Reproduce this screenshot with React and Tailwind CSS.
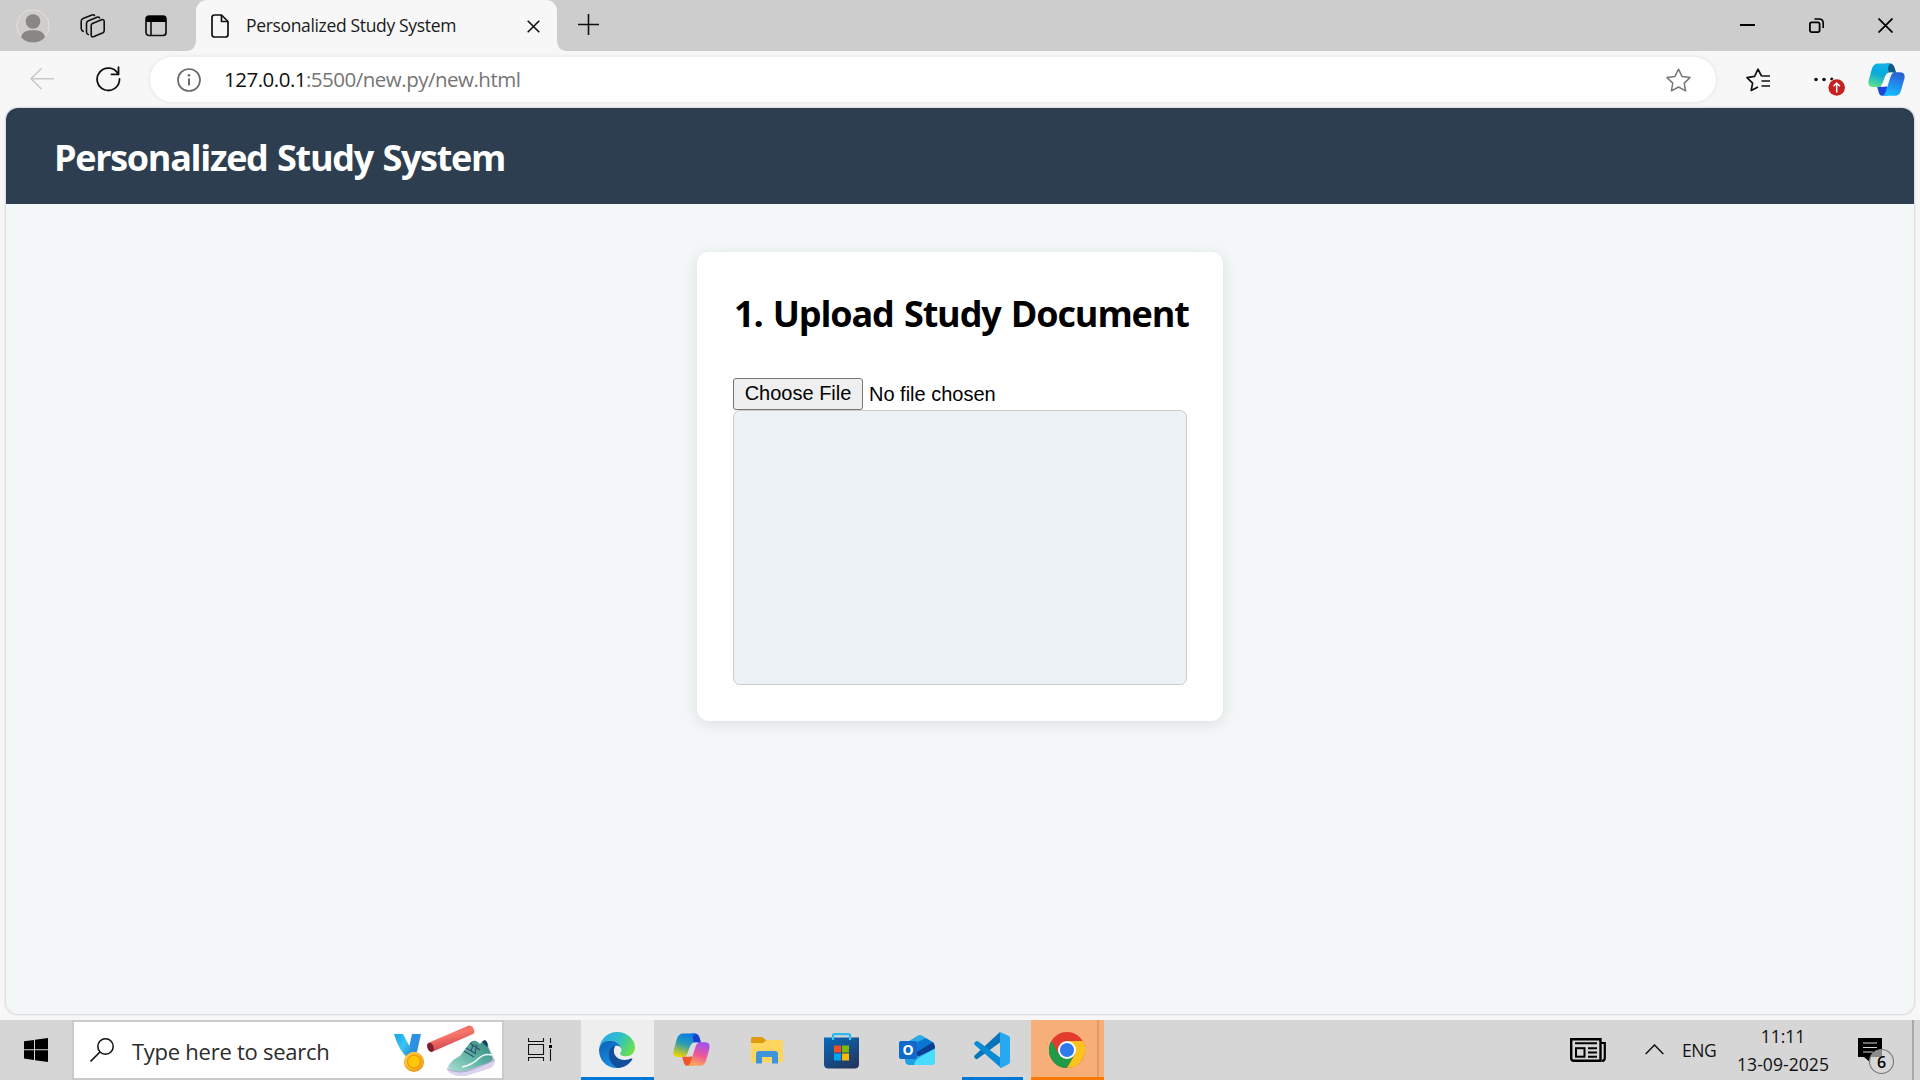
import React from "react";

const ui = "font-['Open_Sans','Noto_Sans',sans-serif]";

function Svg({ w, h, className = "", children, vb }) {
  return (
    <svg
      width={w}
      height={h}
      viewBox={vb || `0 0 ${w} ${h}`}
      fill="none"
      className={`block shrink-0 ${className}`}
    >
      {children}
    </svg>
  );
}

function TabBar() {
  return (
    <div className="flex h-[51px] w-full items-start bg-[#cdcdcd]">
      <Svg w={34} h={34} className="ml-4 mt-[9px]">
        <circle cx="17" cy="17" r="16.2" fill="#d0cdca" stroke="#e4e2df" strokeWidth="1" />
        <circle cx="17" cy="12.5" r="7.3" fill="#8a8683" />
        <path d="M5 28.3C6 23 10.500 21.200 17 21.200S28 23 29 28.300A16.200 16.200 0 0 1 5 28.300Z" fill="#8a8683" />
      </Svg>
      <Svg w={26} h={26} className="ml-[30px] mt-[13px]">
        <g stroke="#111" strokeWidth="1.6" strokeLinejoin="round" strokeLinecap="round">
          <path d="M11.200 12.400Q11.200 11 12.500 10.400L21.500 6.700Q24.200 6 24.200 8.500V17.500Q24.200 19 23 19.700L14 23.600Q11.200 24.500 11.200 22Z" />
          <path d="M8.300 21.500Q6.500 21 6.500 19V10.400Q6.500 8.700 8 8L17 4.200Q18.600 3.700 19.500 4.800" />
          <path d="M3.200 18.300Q1.200 17.500 1.200 15.300V8.300Q1.200 6.300 3 5.500L12 1.900Q13.600 1.400 14.500 2.400" />
        </g>
      </Svg>
      <Svg w={22} h={22} className="ml-[39px] mt-[15px]">
        <rect x="1" y="1" width="20" height="19.500" rx="3" stroke="#111" strokeWidth="1.700" />
        <path d="M1 7V4Q1 1 4 1H18Q21 1 21 4V7Z" fill="#000" />
        <path d="M6 7V20.500" stroke="#111" strokeWidth="1.600" />
      </Svg>
      <div className="ml-[20px] flex h-[51px] items-end">
        <Svg w={9} h={51}>
          <path d="M9 40V51H0Q9 50 9 40Z" fill="#f7f7f7" />
        </Svg>
        <div className="flex h-[51px] w-[361px] items-start rounded-t-[11px] bg-[#f7f7f7]">
          <Svg w={18} h={24} className="ml-[15px] mt-[14px]">
            <path d="M3.500 1H10.500L17 7.500V20.500Q17 23 14.500 23H3.500Q1 23 1 20.500V3.500Q1 1 3.500 1Z" stroke="#111" strokeWidth="1.700" strokeLinejoin="round" />
            <path d="M10.500 1V7.500H17" stroke="#111" strokeWidth="1.700" strokeLinejoin="round" />
          </Svg>
          <span className={`${ui} ml-[17px] mt-[13px] w-[260px] whitespace-nowrap text-[17.500px] leading-6 tracking-[-0.340px] text-[#1b1b1b]`}>
            Personalized Study System
          </span>
          <Svg w={13} h={13} className="ml-[21px] mt-[20px]">
            <path d="M.7.700 12.300 12.300M12.300.700.700 12.300" stroke="#111" strokeWidth="1.600" />
          </Svg>
        </div>
        <Svg w={9} h={51}>
          <path d="M0 40V51H9Q0 50 0 40Z" fill="#f7f7f7" />
        </Svg>
      </div>
      <Svg w={21} h={21} className="ml-[12px] mt-[14px]">
        <path d="M10.500 0V21M0 10.500H21" stroke="#111" strokeWidth="1.600" />
      </Svg>
      <div className="ml-auto mr-[27px] mt-[18px] flex gap-[54px]">
        <Svg w={15} h={15}>
          <path d="M0 7H15" stroke="#000" strokeWidth="2" />
        </Svg>
        <Svg w={15} h={15}>
          <rect x=".9" y="4.400" width="9.700" height="9.700" rx="1.800" stroke="#000" strokeWidth="1.800" />
          <path d="M5.500 1H10Q14.200 1 14.200 5.200V10" stroke="#000" strokeWidth="1.600" />
        </Svg>
        <Svg w={15} h={15}>
          <path d="M.5.500 14.500 14.500M14.500.500.500 14.500" stroke="#000" strokeWidth="1.800" />
        </Svg>
      </div>
    </div>
  );
}

function Toolbar() {
  return (
    <div className="flex h-[57px] w-full items-start bg-[#f7f7f7]">
      <Svg w={24} h={22} className="ml-[30px] mt-[17px]">
        <path d="M24 10.700H1M11.500.500 1 10.700 11.500 21" stroke="#c9c9c9" strokeWidth="1.600" />
      </Svg>
      <Svg w={26} h={26} className="ml-[41px] mt-[15px]">
        <path d="M23.300 8.200A11.200 11.200 0 1 0 24.500 13" stroke="#111" strokeWidth="1.800" strokeLinecap="round" />
        <path d="M23.500 1.200V8.300H16.500" stroke="#111" strokeWidth="1.800" strokeLinejoin="round" strokeLinecap="round" />
      </Svg>
      <div className="ml-[29px] mt-[6px] flex h-[45px] w-[1566px] items-start rounded-full bg-white shadow-[0_0_5px_rgba(0,0,0,0.09)]">
        <Svg w={24} h={24} className="ml-[27px] mt-[10.500px]">
          <circle cx="12" cy="12" r="11" stroke="#6a6a6a" strokeWidth="1.700" />
          <path d="M12 10.500V17.500" stroke="#6a6a6a" strokeWidth="2" />
          <circle cx="12" cy="7.300" r="1.300" fill="#6a6a6a" />
        </Svg>
        <span className={`${ui} ml-[23px] mt-[8px] whitespace-nowrap text-[20.500px] leading-[28px] tracking-[-0.500px] text-[#757575]`}>
          <span className="text-[#111]">127.0.0.1</span>:5500/new.py/new.html
        </span>
        <Svg w={25} h={24} className="ml-auto mr-[25px] mt-[10.500px]">
          <path d="M12.500 1.200 16 8.400 24 9.600 18.200 15.100 19.600 22.800 12.500 19 5.400 22.800 6.800 15.100 1 9.600 9 8.400Z" stroke="#777" strokeWidth="1.500" strokeLinejoin="round" />
        </Svg>
      </div>
      <Svg w={25} h={24} className="ml-[30px] mt-[16.500px]">
        <path d="M15.500 8 12 1.200 8.600 8.400 1 9.600 6.600 15.100 5.200 22.500 12 19M15.500 8H24M15.500 13H24M15.500 18H24" stroke="#111" strokeWidth="1.700" strokeLinejoin="round" />
      </Svg>
      <Svg w={32} h={24} className="ml-[42px] mt-[22px]">
        <circle cx="3" cy="6.500" r="1.800" fill="#111" />
        <circle cx="11" cy="6.500" r="1.800" fill="#111" />
        <circle cx="18.800" cy="6" r="1.600" fill="#111" />
        <circle cx="23.700" cy="14.500" r="8.900" fill="#f7f7f7" />
        <circle cx="23.700" cy="14.500" r="8.300" fill="#c8201f" />
        <path d="M23.700 19.500V10.500M20.500 13.200 23.700 10 26.900 13.200" stroke="#fff" strokeWidth="1.500" />
      </Svg>
      <CopilotIcon
        className="ml-[23px] mt-[12px]"
        id="edge"
        a={["#12b5e8", "#0aa8dc", "#5ee08a"]}
        b={["#2b5fd0", "#1f8df0", "#12c0ff"]}
        c="#0c5a86"
        d="#1b46d8"
        gap="#f7f7f7"
      />
    </div>
  );
}

function CopilotIcon({ className, id, a, b, c, d, gap }) {
  return (
    <Svg w={37} h={34} className={className}>
      <defs>
        <linearGradient id={id + "a"} x1=".6" y1="0" x2=".3" y2="1">
          <stop stopColor={a[0]} />
          <stop offset=".45" stopColor={a[1]} />
          <stop offset="1" stopColor={a[2]} />
        </linearGradient>
        <linearGradient id={id + "b"} x1=".6" y1="0" x2=".3" y2="1">
          <stop stopColor={b[0]} />
          <stop offset=".5" stopColor={b[1]} />
          <stop offset="1" stopColor={b[2]} />
        </linearGradient>
      </defs>
      <path d="M18 .5H22Q25.500 .5 26.700 5L28.200 9.700H19Z" fill={c} />
      <path d="M9 23.500H19L19.500 32.800H14Q11.500 32.800 10.700 29Z" fill={d} />
      <path d="M10 .5H23Q20.300 1.500 19.800 4.500L20.800 9.500Q17 11.500 15.200 18.500Q13.500 24 9.500 24H5Q-.8 24 .6 17.500L3.800 6Q5.500 .5 10 .5Z" fill={`url(#${id}a)`} />
      <path d="M27.500 9.200H31.500Q38 9.200 36.300 16L33 27.500Q31.500 32.800 27 32.800H14Q17 32 17.800 28.500L22.800 13Q24 9.200 27.500 9.200Z" fill={`url(#${id}b)`} />
      <path d="M25.500 9.500H22Q18.700 9.800 17.500 13L14.800 20.500Q14 22.800 12.500 23.700H16Q18.600 23.700 19.500 21L22.600 12Q23.500 9.900 25.500 9.500Z" fill={gap} />
    </Svg>
  );
}

function Page() {
  return (
    <div className="h-[912px] bg-[#f7f7f7] px-[6px]">
      <div className="h-[906px] w-[1908px] overflow-hidden rounded-[12px] bg-[#f3f7f8] shadow-[0_0_2px_1px_rgba(0,0,0,0.13)]">
        <div className="flex h-24 items-start bg-[#2d3e50] pl-[48px]">
          <h1 className={`${ui} mt-[26px] whitespace-nowrap text-[36px] font-bold leading-[48px] tracking-[-1.320px] [word-spacing:1.500px] text-white`}>
            Personalized Study System
          </h1>
        </div>
        <div className="mx-auto mt-12 h-[469px] w-[526px] rounded-[12px] bg-white px-9 pt-[38px] shadow-[0_3px_15px_rgba(0,0,0,0.1)]">
          <h2 className={`${ui} ml-[1px] whitespace-nowrap text-[36px] font-bold leading-[48px] tracking-[-1.140px] [word-spacing:2px] text-black`}>
            1. Upload Study Document
          </h2>
          <div className="mt-10 flex h-8 items-start font-['Liberation_Sans',sans-serif] text-[20px] leading-[22px] text-black">
            <button className="h-8 w-[130px] whitespace-nowrap rounded-[3px] border border-[#767676] bg-[#efefef] pb-[2px] leading-[26px]">
              Choose File
            </button>
            <span className="ml-[6px] mt-[5px] whitespace-nowrap">No file chosen</span>
          </div>
          <div className="h-[275px] w-[454px] rounded-[7px] border border-[#c9cbcd] bg-[#edf2f7]" />
        </div>
      </div>
    </div>
  );
}

function SearchArt() {
  return (
    <Svg w={104} h={54}>
      <defs>
        <linearGradient id="ribbon" x1="0" y1="0" x2="1" y2="1">
          <stop stopColor="#14a3e4" />
          <stop offset=".5" stopColor="#3bc5f4" />
          <stop offset="1" stopColor="#1e7fd2" />
        </linearGradient>
        <linearGradient id="baton" x1="0" y1="0" x2=".4" y2="1">
          <stop stopColor="#d4493f" />
          <stop offset=".45" stopColor="#f9786a" />
          <stop offset="1" stopColor="#cf3f4c" />
        </linearGradient>
        <linearGradient id="shoe" x1="0" y1="1" x2="1" y2="0">
          <stop stopColor="#a9dcd0" />
          <stop offset=".5" stopColor="#5fb3a5" />
          <stop offset="1" stopColor="#2f8379" />
        </linearGradient>
        <linearGradient id="gold" x1="0" y1="0" x2="1" y2="1">
          <stop stopColor="#ffd34a" />
          <stop offset="1" stopColor="#f09a10" />
        </linearGradient>
      </defs>
      <path d="M18 11H27L23 29H14Z" fill="#2f8fe0" />
      <path d="M0 11H9L18 28 14 35Q5 28 0 11Z" fill="url(#ribbon)" />
      <circle cx="20" cy="39" r="10" fill="#eb9912" />
      <circle cx="20" cy="38.500" r="9.500" fill="url(#gold)" />
      <circle cx="20" cy="38.500" r="6.500" fill="#ffc60a" stroke="#f0960c" strokeWidth="1.200" />
      <path d="M35 19.500 75 2.500Q79 3 80 6.500T79 11L39 28.500Q35 29 33.500 25T35 19.500Z" fill="url(#baton)" />
      <ellipse cx="36.500" cy="24.300" rx="3" ry="4.700" transform="rotate(-20 36.500 24.300)" fill="#7c1f35" />
      <path d="M53 46Q54 40 66 33L76 20Q78 17 82 18L86 21 90 17Q94 19 95 24L101 37Q101 44 94 46L72 53Q55 54 53 46Z" fill="#d9d4ec" />
      <path d="M55 43Q56 38 66 33L76 20Q78 17 82 18L86 21 90 17Q94 19 94 24L99 36Q96 41 88 42L72 48Q56 51 55 43Z" fill="url(#shoe)" />
      <path d="M88 19 91 17Q95 20 93 24Z" fill="#14445a" />
      <path d="M72 25 82 31M70 28 80 34M76 20 86 27M77 28 79 22M81 30 83 22" stroke="#30506f" strokeWidth="1.100" />
      <path d="M68 44Q78 42 84 36T98 32" stroke="#eef9f7" strokeWidth="1.700" />
      <path d="M53 46Q66 52 80 46T101 37" stroke="#b2a7cf" strokeWidth="1" />
    </Svg>
  );
}

function EdgeIcon() {
  return (
    <Svg w={36} h={36} vb="0 0 256 256">
      <defs>
        <linearGradient id="eg1" x1="0" y1=".2" x2="1" y2=".6">
          <stop stopColor="#2ba6ec" />
          <stop offset=".5" stopColor="#2dc0c8" />
          <stop offset="1" stopColor="#6ce04c" />
        </linearGradient>
        <linearGradient id="eg2" x1="0" y1="0" x2=".4" y2="1">
          <stop stopColor="#0a62b5" />
          <stop offset="1" stopColor="#1a8de0" />
        </linearGradient>
      </defs>
      <path d="M2 118C8 50 62 0 128 0C204 0 256 56 256 108C256 148 228 172 192 172C166 172 148 162 150 152C151 146 160 142 160 128C160 92 122 62 78 62C40 62 12 88 2 118Z" fill="url(#eg1)" />
      <path d="M0 128C4 84 40 62 78 62C118 62 152 84 159 118C148 98 130 96 116 100C92 108 84 140 96 172C108 206 138 232 168 236C156 248 140 256 124 256C54 256 0 200 0 128Z" fill="url(#eg2)" />
      <path d="M116 98C80 102 64 138 72 176C80 220 112 250 134 256C178 254 216 230 236 196C240 188 234 186 228 189C206 200 172 202 146 192C110 178 94 136 116 98Z" fill="#114f9c" />
    </Svg>
  );
}

function FolderIcon() {
  return (
    <Svg w={32} h={27}>
      <path d="M0 2Q0 0 2 0H11L15 3H30Q32 3 32 5V8H0Z" fill="#dd9c0e" />
      <path d="M0 6H12L15.500 3H30.500Q32 3 32 4.500V23.500Q32 25.500 30 25.500H2Q0 25.500 0 23.500Z" fill="#ffd45f" />
      <path d="M5 26.500V17Q5 14 8 14H24Q27 14 27 17V26.500H21V20H11V26.500Z" fill="#3d94dc" />
    </Svg>
  );
}

function StoreIcon() {
  return (
    <Svg w={35} h={36}>
      <defs>
        <linearGradient id="st" x1=".2" y1="0" x2=".8" y2="1">
          <stop stopColor="#0a67b5" />
          <stop offset="1" stopColor="#22355f" />
        </linearGradient>
      </defs>
      <path d="M9 7.500V2.500Q9 1.200 10.500 1.200H24.500Q26 1.200 26 2.500V7.500" stroke="#29b9f2" strokeWidth="2.200" />
      <path d="M0 4.500H35V31Q35 35.500 30.500 35.500H4.500Q0 35.500 0 31Z" fill="url(#st)" />
      <path d="M9 4V7M26 4V7" stroke="#3cc8f5" strokeWidth="2.200" />
      <path d="M10 12.500H17V19.500H10Z" fill="#f25022" />
      <path d="M18 12.500H25V19.500H18Z" fill="#7fba00" />
      <path d="M10 20.500H17V27.500H10Z" fill="#00a4ef" />
      <path d="M18 20.500H25V27.500H18Z" fill="#ffb900" />
    </Svg>
  );
}

function OutlookIcon() {
  return (
    <div className="relative h-[34px] w-9">
      <Svg w={36} h={34}>
        <path d="M6 8.500 19 .6Q21 -.4 23 .6L35 8V20H6Z" fill="#2aa9e6" />
        <path d="M14 9 27 3.200 35 8 18 19.500H14Z" fill="#0a76d2" />
        <path d="M17 17.500 33.500 7.500Q36 8.800 36 11.500V14L20 25Z" fill="#0b3f94" />
        <path d="M6 22 18 22 36 13.800V25.500Q36 30 31.500 30H11Q6 30 6 25Z" fill="#1f9fe4" />
        <path d="M15 30Q16 24.500 21 22L36 13.500V25.500Q36 30 31.500 30Z" fill="#49dcff" />
        <rect x="0" y="6" width="18" height="18" rx="2" fill="#1169cb" />
      </Svg>
      <span className="absolute left-0 top-[5px] w-[18px] text-center font-['Open_Sans',sans-serif] text-[14px] font-bold leading-[20px] text-white">
        O
      </span>
    </div>
  );
}

function VsCodeIcon() {
  return (
    <Svg w={36} h={36}>
      <path d="M26 0 .8 23.200Q-.4 24.500 .6 25.700L1.600 26.700Q2.700 27.600 4 26.600L27 9.800Z" fill="#0574b9" />
      <path d="M4 9.300 27 26.300V36L.6 12.800Q-.4 11.600 .6 10.400L1.700 9.400Q2.700 8.500 4 9.300Z" fill="#098bd5" />
      <path d="M26 0 34.500 3.700Q36 4.400 36 6V30Q36 31.600 34.500 32.300L27 36Q26 36 26 35Z" fill="#27a9f2" />
    </Svg>
  );
}

function ChromeIcon() {
  return (
    <Svg w={36} h={36}>
      <circle cx="18" cy="18" r="18" fill="#e33b2e" />
      <path d="M2.400 9A18 18 0 0 0 18 36L25.800 22.500 18 18 10.200 22.500Z" fill="#1f9a48" />
      <path d="M33.600 9A18 18 0 0 1 18 36L25.800 22.500 18 9Z" fill="#fcc31c" />
      <circle cx="18" cy="18" r="9" fill="#fff" />
      <circle cx="18" cy="18" r="7.100" fill="#2f7bee" />
    </Svg>
  );
}

function Taskbar() {
  return (
    <div className="flex h-[60px] w-full items-start bg-[#d6d6d6]">
      <Svg w={24} h={24} className="ml-6 mt-[18px]">
        <path d="M0 3.300 10 1.900V11.300H0ZM11 1.700 24 0V11.300H11ZM0 12.300H10V22L0 20.600ZM11 12.300H24V24L11 22.200Z" fill="#000" />
      </Svg>
      <div className="ml-6 flex h-[60px] w-[432px] items-start border-2 border-[#cacaca] bg-white">
        <Svg w={25} h={25} className="ml-4 mt-[16px]">
          <circle cx="15.500" cy="8.500" r="7.700" stroke="#111" strokeWidth="1.500" />
          <path d="M10 14 .5 23.500" stroke="#111" strokeWidth="1.600" />
        </Svg>
        <span className={`${ui} ml-[17px] mt-[15px] w-[263px] whitespace-nowrap text-[22px] leading-[28px] tracking-[-0.260px] text-[#2b2b2b]`}>
          Type here to search
        </span>
        <div className="-ml-[1px] mt-[1px]">
          <SearchArt />
        </div>
      </div>
      <Svg w={24} h={24} className="ml-[24px] mt-[18px]">
        <path d="M.5 0V3.500H15.500V0M.5 23V19.500H15.500V23M.5 6.500H15.500V16.500H.500ZM22.500 0V5M22.500 11V23" stroke="#111" strokeWidth="1.100" />
        <path d="M21 7H24V10H21Z" fill="#000" />
      </Svg>
      <div className="ml-[29px] h-[60px] w-[73px] border-b-[3px] border-[#0078d7] bg-[#eeeeee] pl-[18px] pt-3">
        <EdgeIcon />
      </div>
      <CopilotIcon
        className="ml-[19px] mt-[13px]"
        id="win"
        a={["#0b7bea", "#2a9fb0", "#f2d400"]}
        b={["#a052f0", "#ee5599", "#ffae55"]}
        c="#1a3fd0"
        d="#f0562c"
        gap="#dcdcdc"
      />
      <div className="ml-[41px] mt-[17px]"><FolderIcon /></div>
      <div className="ml-[41px] mt-[13px]"><StoreIcon /></div>
      <div className="ml-10 mt-[15px]"><OutlookIcon /></div>
      <div className="ml-[27px] h-[60px] w-[61px] border-b-[3px] border-[#0078d7] pl-3 pt-3">
        <VsCodeIcon />
      </div>
      <div className="ml-2 flex h-[60px] w-[73px] border-b-[3px] border-[#ff7800] bg-[#f8ae78]">
        <div className="w-[66px] pl-[18px] pt-3"><ChromeIcon /></div>
        <div className="h-full w-[2px] bg-[#e09a66]" />
      </div>
      <div className="ml-auto flex items-start">
        <Svg w={37} h={25} className="mt-[18px]">
          <path d="M1.200 1.200H30.500V22.800H4Q1.200 22.800 1.200 20Z" stroke="#000" strokeWidth="2.400" />
          <path d="M30.500 5H34.800V20Q34.800 22.800 32 22.800" stroke="#000" strokeWidth="2.200" />
          <path d="M5 5.200H27M18 10.200H27M18 14.500H27M18 18.800H27" stroke="#000" strokeWidth="1.900" />
          <rect x="6" y="10.200" width="8.500" height="8.500" stroke="#000" strokeWidth="2" />
        </Svg>
        <Svg w={19} h={11} className="ml-[38px] mt-6">
          <path d="M.7 10 9.500 1 18.300 10" stroke="#111" strokeWidth="1.500" />
        </Svg>
        <span className={`${ui} ml-[18px] mt-[18px] w-[52px] whitespace-nowrap text-[17.500px] leading-6 tracking-[-0.400px] text-[#111]`}>
          ENG
        </span>
        <div className={`${ui} mt-[2px] w-[98px] whitespace-nowrap text-center text-[17.500px] leading-[28px] text-[#111]`}>
          <div>11:11</div>
          <div className="tracking-[0.070px]">13-09-2025</div>
        </div>
        <div className="relative ml-[26px] mt-[18px] h-[38px] w-[37px]">
          <Svg w={37} h={38}>
            <path d="M0 0H24V19H13V25L6 19H0Z" fill="#000" />
            <path d="M5 5H19M5 9.500H19M5 14H15" stroke="#d6d6d6" strokeWidth="1.200" />
            <circle cx="23.500" cy="23.500" r="12" fill="#d6d6d6" fillOpacity=".96" stroke="#777" strokeWidth="1.100" />
            <path d="M12 20.500Q14 12 24 11.500V19H13Z" fill="#8b8b8b" />
          </Svg>
          <span className={`${ui} absolute left-[11.500px] top-[12px] w-6 text-center text-[16px] font-semibold leading-6 text-black`}>6</span>
        </div>
        <div className="ml-[17px] h-[60px] w-[2px] bg-[#a9a9a9]" />
        <div className="w-[6px]" />
      </div>
    </div>
  );
}

export default function App() {
  return (
    <div className="flex h-[1080px] w-[1920px] flex-col overflow-hidden bg-[#f7f7f7]">
      <TabBar />
      <Toolbar />
      <Page />
      <Taskbar />
    </div>
  );
}
